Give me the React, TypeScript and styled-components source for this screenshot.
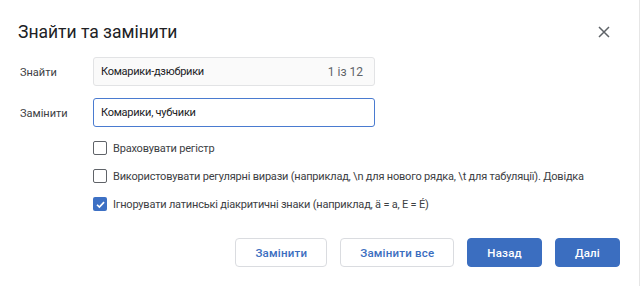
import React from 'react'
import styled, { createGlobalStyle } from 'styled-components'

const GlobalStyle = createGlobalStyle`
  html, body {
    margin: 0;
    padding: 0;
    background: #fff;
  }
  body {
    font-family: Roboto, "Liberation Sans", Arial, sans-serif;
    color: #3c4043;
  }
`

const options = [
  { label: 'Враховувати регістр', checked: false },
  {
    label:
      'Використовувати регулярні вирази (наприклад, \\n для нового рядка, \\t для табуляції). Довідка',
    checked: false,
  },
  { label: 'Ігнорувати латинські діакритичні знаки (наприклад, ä = a, E = É)', checked: true },
]

const App = () => {
  return (
    <>
      <GlobalStyle />
      <Dialog>
        <Header>
          <Title>Знайти та замінити</Title>
          <CloseButton aria-label="Закрити">
            <svg width="12" height="12" viewBox="0 0 12 12">
              <path d="M1 1L11 11M11 1L1 11" stroke="#5f6368" strokeWidth="1.5" />
            </svg>
          </CloseButton>
        </Header>
        <Form>
          <Label>Знайти</Label>
          <Field>
            <FieldText>Комарики-дзюбрики</FieldText>
            <Counter>1 із 12</Counter>
          </Field>
          <Label>Замінити</Label>
          <Field focused>
            <FieldText>Комарики, чубчики</FieldText>
          </Field>
        </Form>
        <Options>
          {options.map((o) => (
            <OptionRow key={o.label}>
              <Box checked={o.checked}>
                {o.checked && (
                  <svg width="11" height="11" viewBox="0 0 12 12">
                    <path d="M2.2 6.3L4.8 8.8L9.9 3.4" stroke="#fff" strokeWidth="1.8" fill="none" />
                  </svg>
                )}
              </Box>
              <OptionText>{o.label}</OptionText>
            </OptionRow>
          ))}
        </Options>
        <Footer>
          <Button>Замінити</Button>
          <Button>Замінити все</Button>
          <Button primary>Назад</Button>
          <Button primary>Далі</Button>
        </Footer>
      </Dialog>
    </>
  )
}

const Dialog = styled.div`
  width: 640px;
  height: 286px;
  box-sizing: border-box;
  border-right: 1px solid #e6e6e6;
  background: #fff;
  display: flex;
  flex-direction: column;
`

const Header = styled.div`
  display: flex;
  align-items: center;
  justify-content: space-between;
  padding: 19px 29px 0 18px;
  height: 26px;
`

const Title = styled.div`
  font-size: 17.5px;
  color: #202124;
  line-height: 26px;
`

const CloseButton = styled.div`
  display: flex;
  width: 12px;
  height: 12px;
`

const Form = styled.div`
  display: grid;
  grid-template-columns: 73px 282px;
  row-gap: 12px;
  align-items: center;
  padding: 12px 0 0 20px;
`

const Label = styled.div`
  font-size: 11px;
  padding-top: 2px;
  color: #3c4043;
`

const Field = styled.div<{ focused?: boolean }>`
  box-sizing: border-box;
  height: 29px;
  display: flex;
  align-items: center;
  justify-content: space-between;
  padding: 0 11px 0 7px;
  border-radius: 3px;
  border: ${(p) => (p.focused ? '1.5px solid #4a7bd0' : '1px solid #e2e3e5')};
  background: ${(p) => (p.focused ? '#fff' : '#fafafa')};
`

const FieldText = styled.span`
  font-size: 11px;
  letter-spacing: -0.25px;
  color: #202124;
`

const Counter = styled.span`
  font-size: 12px;
  color: #5f6368;
`

const Options = styled.div`
  display: flex;
  flex-direction: column;
  padding: 7px 0 0 93px;
`

const OptionRow = styled.div`
  display: flex;
  align-items: center;
  height: 28px;
  gap: 6px;
`

const Box = styled.div<{ checked?: boolean }>`
  box-sizing: border-box;
  width: 14px;
  height: 14px;
  border-radius: 2px;
  display: flex;
  align-items: center;
  justify-content: center;
  border: ${(p) => (p.checked ? 'none' : '1.5px solid #5f6368')};
  background: ${(p) => (p.checked ? '#3d70c4' : '#fff')};
`

const OptionText = styled.span`
  font-size: 11px;
  letter-spacing: -0.2px;
  color: #3c4043;
  white-space: nowrap;
`

const Footer = styled.div`
  display: flex;
  justify-content: flex-end;
  gap: 13px;
  padding: 20px 19px 0 0;
`

const Button = styled.button<{ primary?: boolean }>`
  box-sizing: border-box;
  height: 29px;
  padding: 0 19px;
  border-radius: 4px;
  font-family: Roboto, "Liberation Sans", Arial, sans-serif;
  font-size: 11.5px;
  font-weight: 500;
  letter-spacing: 0.2px;
  border: 1px solid ${(p) => (p.primary ? '#3b6ec0' : '#dadce0')};
  background: ${(p) => (p.primary ? '#3b6ec0' : '#fff')};
  color: ${(p) => (p.primary ? '#fff' : '#3b6ec0')};
`

export default App
